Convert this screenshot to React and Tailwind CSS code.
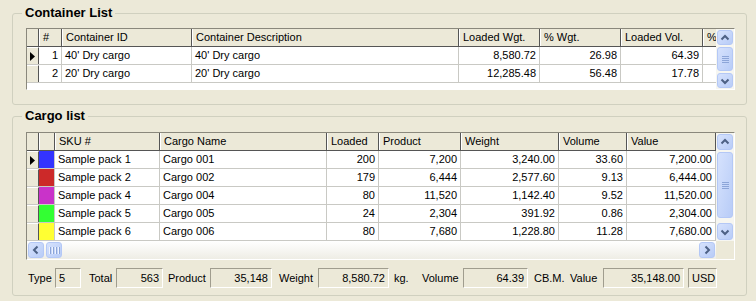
import React from "react";

const containerCols = [
  { key: "no", title: "#", w: "w-[23px]", right: true },
  { key: "id", title: "Container ID", w: "w-[130px]" },
  { key: "desc", title: "Container Description", w: "w-[267px]" },
  { key: "wgt", title: "Loaded Wgt.", w: "w-[81px]", right: true },
  { key: "pwgt", title: "% Wgt.", w: "w-[81px]", right: true },
  { key: "vol", title: "Loaded Vol.", w: "w-[82px]", right: true },
  { key: "pvol", title: "%", w: "w-[40px]", right: true },
];

const containers = [
  { no: "1", id: "40' Dry cargo", desc: "40' Dry cargo", wgt: "8,580.72", pwgt: "26.98", vol: "64.39", pvol: "" },
  { no: "2", id: "20' Dry cargo", desc: "20' Dry cargo", wgt: "12,285.48", pwgt: "56.48", vol: "17.78", pvol: "" },
];

const cargoCols = [
  { key: "sku", title: "SKU #", w: "w-[105px]" },
  { key: "name", title: "Cargo Name", w: "w-[167px]" },
  { key: "loaded", title: "Loaded", w: "w-[52px]", right: true },
  { key: "product", title: "Product", w: "w-[82px]", right: true },
  { key: "weight", title: "Weight", w: "w-[98px]", right: true },
  { key: "volume", title: "Volume", w: "w-[68px]", right: true },
  { key: "value", title: "Value", w: "w-[89px]", right: true },
];

const cargo = [
  { color: "bg-[#3333ff]", sku: "Sample pack 1", name: "Cargo 001", loaded: "200", product: "7,200", weight: "3,240.00", volume: "33.60", value: "7,200.00" },
  { color: "bg-[#cc2929]", sku: "Sample pack 2", name: "Cargo 002", loaded: "179", product: "6,444", weight: "2,577.60", volume: "9.13", value: "6,444.00" },
  { color: "bg-[#c933c9]", sku: "Sample pack 4", name: "Cargo 004", loaded: "80", product: "11,520", weight: "1,142.40", volume: "9.52", value: "11,520.00" },
  { color: "bg-[#33ff33]", sku: "Sample pack 5", name: "Cargo 005", loaded: "24", product: "2,304", weight: "391.92", volume: "0.86", value: "2,304.00" },
  { color: "bg-[#ffff33]", sku: "Sample pack 6", name: "Cargo 006", loaded: "80", product: "7,680", weight: "1,228.80", volume: "11.28", value: "7,680.00" },
];

function Chevron({ dir }) {
  const d = {
    up: "M1.5 5.5 L5 2 L8.5 5.5",
    down: "M1.5 2.5 L5 6 L8.5 2.5",
    left: "M5.5 1.5 L2 5 L5.5 8.5",
    right: "M2.5 1.5 L6 5 L2.5 8.5",
  }[dir];
  const vert = dir === "up" || dir === "down";
  return (
    <svg width={vert ? 10 : 8} height={vert ? 8 : 10} viewBox={vert ? "0 0 10 8" : "0 0 8 10"}>
      <path d={d} fill="none" stroke="#4d6185" strokeWidth="2" />
    </svg>
  );
}

function Btn({ className = "", children }) {
  return (
    <div className={`flex items-center justify-center rounded-[3px] border border-[#b4c8f6] bg-gradient-to-br from-[#d6e2fd] to-[#b8ccf7] shrink-0 ${className}`}>
      {children}
    </div>
  );
}

function VGrip() {
  return (
    <div className="flex flex-col gap-[1px]">
      <div className="w-[7px] h-[1px] bg-[#eef3fe] border-b border-[#8ca5d8]" />
      <div className="w-[7px] h-[1px] bg-[#eef3fe] border-b border-[#8ca5d8]" />
      <div className="w-[7px] h-[1px] bg-[#eef3fe] border-b border-[#8ca5d8]" />
      <div className="w-[7px] h-[1px] bg-[#eef3fe] border-b border-[#8ca5d8]" />
    </div>
  );
}

function HGrip() {
  return (
    <div className="flex gap-[1px]">
      <div className="h-[7px] w-[2px] border-l border-[#eef3fe] border-r border-r-[#8ca5d8]" />
      <div className="h-[7px] w-[2px] border-l border-[#eef3fe] border-r border-r-[#8ca5d8]" />
      <div className="h-[7px] w-[2px] border-l border-[#eef3fe] border-r border-r-[#8ca5d8]" />
      <div className="h-[7px] w-[2px] border-l border-[#eef3fe] border-r border-r-[#8ca5d8]" />
    </div>
  );
}

function HeaderCell({ w, children }) {
  return (
    <div className={`${w} shrink-0 h-full border-l border-l-white border-r border-r-[#555] bg-[#ece9d8] pl-[3px] leading-[17px] whitespace-nowrap overflow-hidden`}>
      {children}
    </div>
  );
}

function Cell({ w, right, children }) {
  return (
    <div className={`${w} shrink-0 h-full border-r border-[#c9c9c4] px-[3px] leading-[17px] whitespace-nowrap overflow-hidden ${right ? "text-right" : ""}`}>
      {children}
    </div>
  );
}

function RowHead({ current }) {
  return (
    <div className="w-[12px] shrink-0 h-full border-t border-t-white border-r border-r-[#555] bg-[#ece9d8] flex items-center justify-center">
      {current && (
        <svg width="5" height="9" viewBox="0 0 5 9">
          <path d="M0 0 L5 4.5 L0 9 Z" fill="#000" />
        </svg>
      )}
    </div>
  );
}

function Group({ title, className, children }) {
  return (
    <div className={`relative border border-[#d0d0bf] rounded-[3px] pl-[13px] ${className}`}>
      <span className="absolute left-[9px] -top-[10px] px-[3px] bg-[#ece9d8] font-bold text-[13px] leading-[18px]">
        {title}
      </span>
      {children}
    </div>
  );
}

function Field({ w, right, children }) {
  return (
    <div className={`${w} h-[20px] shrink-0 border border-t-[#a09d8e] border-l-[#a09d8e] border-b-white border-r-white bg-[#ece9d8] px-[3px] leading-[18px] ${right ? "text-right" : ""}`}>
      {children}
    </div>
  );
}

function Label({ w, children }) {
  return <span className={`${w} shrink-0 leading-[20px] whitespace-nowrap`}>{children}</span>;
}

export default function App() {
  return (
    <div className="w-[756px] h-[301px] bg-[#ece9d8] pt-[13px] pl-[12px] text-[11px] text-black font-['Liberation_Sans',Arial,sans-serif] overflow-hidden">
      <Group title="Container List" className="w-[735px] h-[92px] pt-[14px]">
        <div className="w-[709px] h-[62px] border border-t-[#8a887c] border-l-[#8a887c] border-b-white border-r-white flex bg-white">
          <div className="flex-1 flex flex-col overflow-hidden">
            <div className="flex h-[18px] border-b border-[#555] shrink-0">
              <div className="w-[12px] shrink-0 h-full border-r border-[#555] bg-[#ece9d8]" />
              {containerCols.map(c => (
                <HeaderCell key={c.key} w={c.w}>{c.title}</HeaderCell>
              ))}
            </div>
            {containers.map((r, i) => (
              <div key={r.no} className="flex h-[18px] border-b border-[#c9c9c4] shrink-0">
                <RowHead current={i === 0} />
                {containerCols.map(c => (
                  <Cell key={c.key} w={c.w} right={c.right}>{r[c.key]}</Cell>
                ))}
              </div>
            ))}
          </div>
          <div className="w-[18px] shrink-0 bg-[#f6f6f1] flex flex-col p-[1px] pl-[1px]">
            <Btn className="h-[15px]"><Chevron dir="up" /></Btn>
            <Btn className="h-[24px] mt-[2px]"><VGrip /></Btn>
            <div className="flex-1" />
            <Btn className="h-[15px]"><Chevron dir="down" /></Btn>
          </div>
        </div>
      </Group>

      <Group title="Cargo list" className="w-[735px] h-[180px] mt-[11px] pt-[15px]">
        <div className="w-[709px] h-[128px] border border-t-[#8a887c] border-l-[#8a887c] border-b-white border-r-white flex flex-col bg-white">
          <div className="flex h-[108px]">
            <div className="flex-1 flex flex-col overflow-hidden">
              <div className="flex h-[18px] border-b border-[#555] shrink-0">
                <div className="w-[12px] shrink-0 h-full border-r border-[#555] bg-[#ece9d8]" />
                <div className="w-[16px] shrink-0 h-full border-l border-l-white border-r border-r-[#555] bg-[#ece9d8]" />
                {cargoCols.map(c => (
                  <HeaderCell key={c.key} w={c.w}>{c.title}</HeaderCell>
                ))}
              </div>
              {cargo.map((r, i) => (
                <div key={r.sku} className="flex h-[18px] border-b border-[#c9c9c4] shrink-0">
                  <RowHead current={i === 0} />
                  <div className={`w-[16px] shrink-0 h-full border-r border-[#c9c9c4] ${r.color}`} />
                  {cargoCols.map(c => (
                    <Cell key={c.key} w={c.w} right={c.right}>{r[c.key]}</Cell>
                  ))}
                </div>
              ))}
            </div>
            <div className="w-[18px] shrink-0 bg-[#f6f6f1] flex flex-col p-[1px]">
              <Btn className="h-[16px]"><Chevron dir="up" /></Btn>
              <Btn className="h-[66px] mt-[2px]"><VGrip /></Btn>
              <div className="flex-1" />
              <Btn className="h-[17px]"><Chevron dir="down" /></Btn>
            </div>
          </div>
          <div className="flex h-[18px]">
            <div className="flex-1 flex items-center p-[1px] bg-gradient-to-b from-white to-[#eeede5]">
              <Btn className="w-[16px] h-[16px]"><Chevron dir="left" /></Btn>
              <Btn className="w-[16px] h-[16px] ml-[2px]"><HGrip /></Btn>
              <div className="flex-1" />
              <Btn className="w-[16px] h-[16px]"><Chevron dir="right" /></Btn>
            </div>
            <div className="w-[18px] shrink-0 bg-[#ece9d8]" />
          </div>
        </div>

        <div className="flex items-center mt-[8px] h-[20px] pl-[2px]">
          <Label w="w-[27px]">Type</Label>
          <Field w="w-[26px]">5</Field>
          <span className="w-[8px] shrink-0" />
          <Label w="w-[27px]">Total</Label>
          <Field w="w-[47px]" right>563</Field>
          <span className="w-[5px] shrink-0" />
          <Label w="w-[42px]">Product</Label>
          <Field w="w-[62px]" right>35,148</Field>
          <span className="w-[7px] shrink-0" />
          <Label w="w-[39px]">Weight</Label>
          <Field w="w-[71px]" right>8,580.72</Field>
          <span className="w-[5px] shrink-0" />
          <Label w="w-[28px]">kg.</Label>
          <Label w="w-[41px]">Volume</Label>
          <Field w="w-[65px]" right>64.39</Field>
          <span className="w-[6px] shrink-0" />
          <Label w="w-[36px]">CB.M.</Label>
          <Label w="w-[33px]">Value</Label>
          <Field w="w-[81px]" right>35,148.00</Field>
          <span className="w-[4px] shrink-0" />
          <Field w="w-[29px]">USD</Field>
        </div>
      </Group>
    </div>
  );
}
